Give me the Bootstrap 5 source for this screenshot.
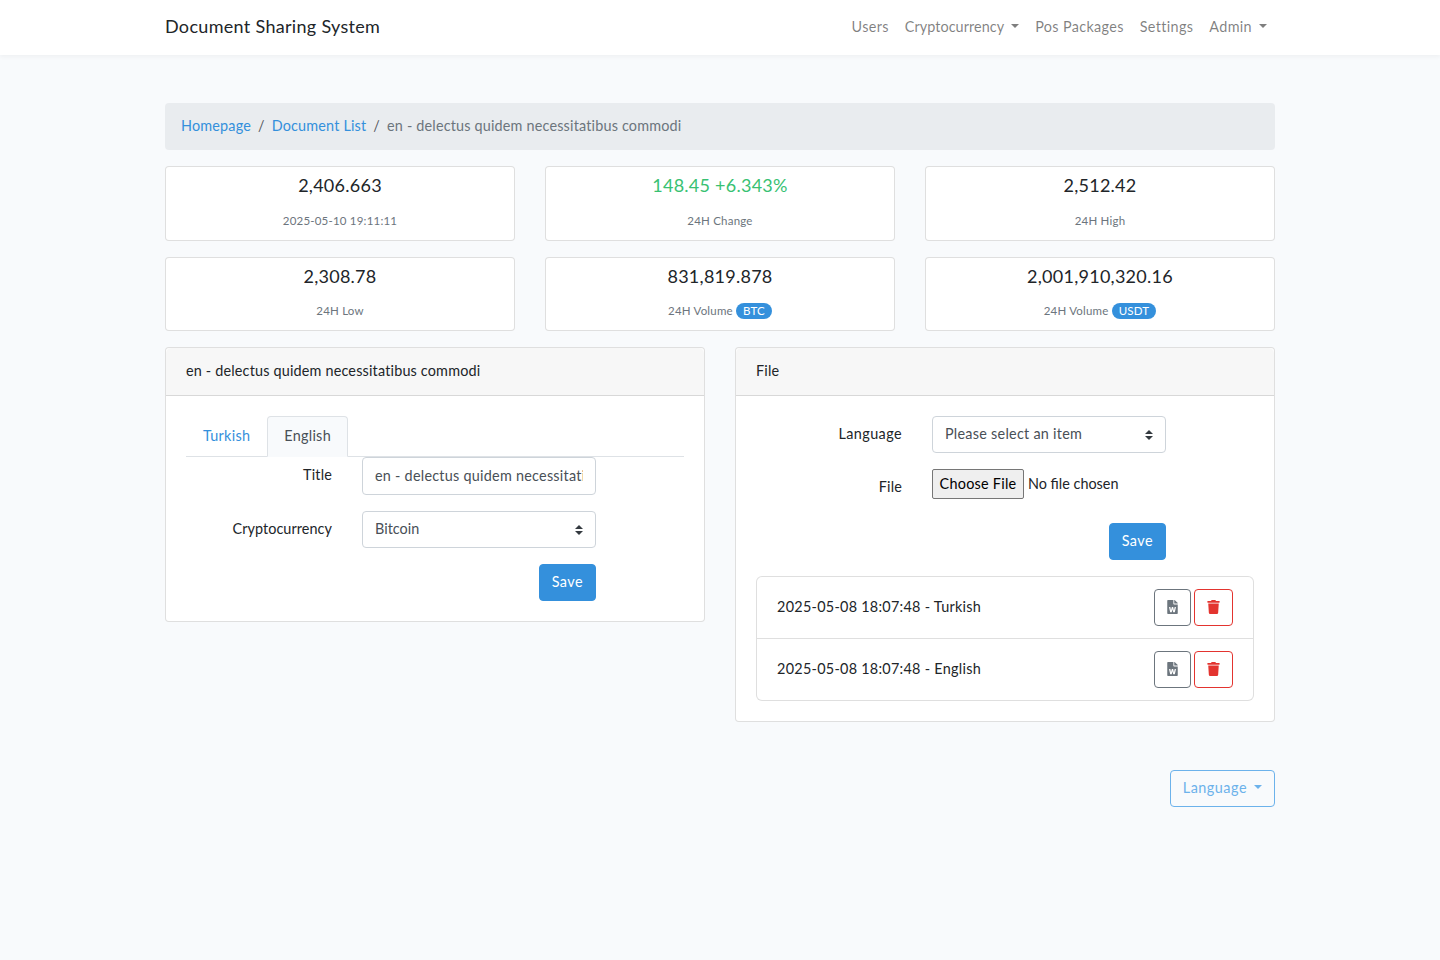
<!DOCTYPE html>
<html lang="en"><head><meta charset="utf-8"><title>Document Sharing System</title>
<link href="https://cdn.jsdelivr.net/npm/bootstrap@5.3.0/dist/css/bootstrap.min.css" rel="stylesheet">
<style>
body{font-family:Lato,"Noto Sans",sans-serif;font-size:14.4px;line-height:1.6;background:#f8fafc;color:#212529;--bs-body-font-size:14.4px;letter-spacing:.18px;}
.wrap{max-width:1140px;margin:0 auto;padding:0 15px;}
.top-bar{background:#fff;height:55px;box-shadow:0 2px 4px rgba(0,0,0,.04);padding:0;}
.top-bar .navbar-brand{font-size:18px;padding:0 0 4px;margin:0;color:#212529;line-height:28px;letter-spacing:.31px;}
.top-bar .nav-link{color:rgba(0,0,0,.5);padding:7px 8px 9px;font-size:14.4px;line-height:23px;letter-spacing:.34px;}
.top-bar .nav-link.tight,.tight{letter-spacing:.07px;}
.top-bar .dropdown-toggle::after{margin-left:7px;}
.page{padding-top:48px;}
.crumbs{background:#e9ecef;border-radius:4px;padding:11px 16px 13px;margin-bottom:16px;font-size:14.4px;--bs-breadcrumb-item-padding-x:7px;}
.crumbs a{color:#3490dc;text-decoration:none;}
.crumbs .breadcrumb-item.active{color:#6c757d;}
.gut{--bs-gutter-x:30px;--bs-gutter-y:0;}
.stat{border:1px solid rgba(0,0,0,.125);border-radius:4px;background:#fff;text-align:center;margin-bottom:16px;height:75px;padding-top:4px;}
.stat-b{height:74px;}
.stat-b h5{margin-bottom:11px;}
.stat h5{font-size:18px;line-height:29px;margin-top:0;font-weight:400;color:#212529;letter-spacing:.25px;}
.stat:not(.stat-b) h5{margin-bottom:12px;}
.stat p{font-size:11.5px;line-height:18px;margin:0;color:#6c757d;letter-spacing:.2px;}
.stat .up{color:#38c172;}
.pill{display:inline-block;background:#3490dc;color:#fff;border-radius:10rem;font-size:11.5px;line-height:12px;padding:2px 7px;font-weight:400;}
.pane{border:1px solid rgba(0,0,0,.125);border-radius:4px;background:#fff;}
.pane>.card-header{padding:11px 20px 13px;background:rgba(0,0,0,.03);border-bottom:1px solid rgba(0,0,0,.125);line-height:23px;height:48px;}
.pane>.card-body{padding:20px;}
.tabs-x .nav-link{padding:7px 16px 9px;color:#3490dc;line-height:23px;height:41px;font-size:14.4px;border-radius:4px 4px 0 0;letter-spacing:.28px;}
.tabs-x .nav-link.active{background:#f8fafc;color:#495057;border-color:#dee2e6 #dee2e6 #f8fafc;}
.tabs-x{border-bottom-color:#dee2e6;}
.lab{text-align:right;font-size:14.4px;line-height:23px;padding-top:6px;padding-bottom:8px;margin:0;}
.lab-t{padding-top:6px;}
.lab-f{padding-top:6px;padding-bottom:9px;}
.lab-w{letter-spacing:.42px;}
.fld{height:38px;font-size:14.4px;color:#495057;border:1px solid #ced4da;border-radius:4px;padding:5px 12px 7px;line-height:23px;letter-spacing:.25px;}
.sel{height:37px;letter-spacing:.02px;}
.sel-w{letter-spacing:.26px;}
.form-select.fld{padding-right:36px;background:#fff url("data:image/svg+xml,%3csvg xmlns='http://www.w3.org/2000/svg' width='4' height='5' viewBox='0 0 4 5'%3e%3cpath fill='%23343a40' d='M2 0L0 2h4zm0 5L0 3h4z'/%3e%3c/svg%3e") right 12px center/8px 10px no-repeat;}
.frow{margin-bottom:16px;}
.act{background:#3490dc;border-color:#3490dc;color:#fff;font-size:14.4px;line-height:23px;padding:5px 12px 7px;border-radius:4px;height:37px;min-width:57px;letter-spacing:.45px;}
.up-f{font-size:14.4px;font-family:inherit;line-height:1;display:block;width:234px;color:#212529;}
.up-f::file-selector-button{height:30px;width:92px;padding:0;margin-right:4px;background:#efefef;border:1px solid #767676;border-radius:2px;color:#000;font:inherit;letter-spacing:.26px;}
.rowlist .list-group-item{padding:12px 20px;border-color:rgba(0,0,0,.125);font-size:14.4px;letter-spacing:.28px;}
.rowlist .list-group-item>span:first-child{padding-bottom:2px;}
.tools{gap:3px;}
.ico{width:37px;height:37px;padding:0;display:inline-flex;align-items:center;justify-content:center;border-radius:4px;background:transparent;}
.ico svg{margin-bottom:2px;}
.ico-g{border:1px solid #6c757d;color:#6c757d;}
.ico-r{border:1px solid #e3342f;color:#e3342f;width:39px;}
.lang{color:#6cb2eb;border:1px solid #6cb2eb;font-size:14.4px;line-height:23px;padding:5px 12px 7px;border-radius:4px;height:37px;background:transparent;letter-spacing:.5px;}
.lang::after{margin-left:7px;}
.foot-lang{margin-top:48px;}
</style></head><body>
<nav class="navbar top-bar"><div class="wrap w-100 d-flex justify-content-between align-items-center">
<a class="navbar-brand" href="#">Document Sharing System</a>
<ul class="nav">
<li class="nav-item"><a class="nav-link" href="#">Users</a></li>
<li class="nav-item"><a class="nav-link dropdown-toggle tight" href="#">Cryptocurrency</a></li>
<li class="nav-item"><a class="nav-link" href="#">Pos Packages</a></li>
<li class="nav-item"><a class="nav-link" href="#">Settings</a></li>
<li class="nav-item"><a class="nav-link dropdown-toggle" href="#">Admin</a></li>
</ul></div></nav>
<main class="wrap page">
<ol class="breadcrumb crumbs"><li class="breadcrumb-item"><a href="#">Homepage</a></li><li class="breadcrumb-item"><a href="#">Document List</a></li><li class="breadcrumb-item active">en - delectus quidem necessitatibus commodi</li></ol>
<div class="row gut">
<div class="col-4"><div class="stat"><h5>2,406.663</h5><p>2025-05-10 19:11:11</p></div></div>
<div class="col-4"><div class="stat"><h5 class="up">148.45 +6.343%</h5><p>24H Change</p></div></div>
<div class="col-4"><div class="stat"><h5>2,512.42</h5><p>24H High</p></div></div>
<div class="col-4"><div class="stat stat-b"><h5>2,308.78</h5><p>24H Low</p></div></div>
<div class="col-4"><div class="stat stat-b"><h5>831,819.878</h5><p>24H Volume <span class="pill">BTC</span></p></div></div>
<div class="col-4"><div class="stat stat-b"><h5>2,001,910,320.16</h5><p>24H Volume <span class="pill">USDT</span></p></div></div>
</div>
<div class="row gut align-items-start">
<div class="col-6"><div class="card pane"><div class="card-header">en - delectus quidem necessitatibus commodi</div><div class="card-body">
<ul class="nav nav-tabs tabs-x"><li class="nav-item"><a class="nav-link" href="#">Turkish</a></li><li class="nav-item"><a class="nav-link active" href="#">English</a></li></ul>
<div class="row gut frow"><label class="col-4 lab lab-t">Title</label><div class="col-6"><input class="form-control fld" value="en - delectus quidem necessitatibus commodi"></div></div>
<div class="row gut frow"><label class="col-4 lab tight">Cryptocurrency</label><div class="col-6"><select class="form-select fld sel"><option>Bitcoin</option></select></div></div>
<div class="row gut"><div class="col-6 offset-4 text-end"><button class="btn act">Save</button></div></div>
</div></div></div>
<div class="col-6"><div class="card pane"><div class="card-header">File</div><div class="card-body">
<div class="row gut frow"><label class="col-4 lab lab-w">Language</label><div class="col-6"><select class="form-select fld sel sel-w"><option>Please select an item</option></select></div></div>
<div class="row gut frow"><label class="col-4 lab lab-f">File</label><div class="col-6"><input type="file" class="up-f"></div></div>
<div class="row gut frow"><div class="col-6 offset-4 text-end"><button class="btn act">Save</button></div></div>
<ul class="list-group rowlist">
<li class="list-group-item d-flex justify-content-between align-items-center"><span>2025-05-08 18:07:48 - Turkish</span><span class="d-flex tools"><button class="ico ico-g"><svg width="11" height="14" viewBox="0 0 384 512" fill="currentColor"><path d="M224 136V0H24C10.7 0 0 10.7 0 24v464c0 13.3 10.7 24 24 24h336c13.3 0 24-10.7 24-24V160H248c-13.2 0-24-10.8-24-24zm57.1 120H305c7.7 0 13.4 7.1 11.7 14.7l-38 168c-1.2 5.5-6.1 9.3-11.7 9.3h-38c-5.5 0-10.3-3.8-11.6-9.1-25.8-103.5-20.8-81.2-25.6-110.5h-.5c-1.1 14.3-2.4 17.4-25.6 110.5-1.3 5.3-6.1 9.1-11.6 9.1H117c-5.6 0-10.5-3.9-11.7-9.4l-37.8-168c-1.7-7.5 4-14.6 11.7-14.6h24.5c5.7 0 10.7 4 11.8 9.7 15.6 78 20.1 109.5 21 122.2 1.6-10.2 7.3-32.7 29.4-122.7 1.3-5.4 6.1-9.1 11.7-9.1h29.1c5.6 0 10.4 3.8 11.7 9.2 24 100.4 28.8 124 29.6 129.4-.2-11.2-2.6-17.8 21.6-129.2 1-5.6 5.9-9.5 11.5-9.5zM384 121.9v6.1H256V0h6.1c6.4 0 12.5 2.5 17 7l97.9 98c4.5 4.5 7 10.6 7 16.9z"/></svg></button><button class="ico ico-r"><svg width="13" height="14" viewBox="0 0 448 512" fill="currentColor"><path d="M432 32H312l-9.4-18.7A24 24 0 0 0 281.1 0H166.8a23.72 23.72 0 0 0-21.4 13.3L136 32H16A16 16 0 0 0 0 48v32a16 16 0 0 0 16 16h416a16 16 0 0 0 16-16V48a16 16 0 0 0-16-16zM53.2 467a48 48 0 0 0 47.9 45h245.8a48 48 0 0 0 47.9-45L416 128H32z"/></svg></button></span></li>
<li class="list-group-item d-flex justify-content-between align-items-center"><span>2025-05-08 18:07:48 - English</span><span class="d-flex tools"><button class="ico ico-g"><svg width="11" height="14" viewBox="0 0 384 512" fill="currentColor"><path d="M224 136V0H24C10.7 0 0 10.7 0 24v464c0 13.3 10.7 24 24 24h336c13.3 0 24-10.7 24-24V160H248c-13.2 0-24-10.8-24-24zm57.1 120H305c7.7 0 13.4 7.1 11.7 14.7l-38 168c-1.2 5.5-6.1 9.3-11.7 9.3h-38c-5.5 0-10.3-3.8-11.6-9.1-25.8-103.5-20.8-81.2-25.6-110.5h-.5c-1.1 14.3-2.4 17.4-25.6 110.5-1.3 5.3-6.1 9.1-11.6 9.1H117c-5.6 0-10.5-3.9-11.7-9.4l-37.8-168c-1.7-7.5 4-14.6 11.7-14.6h24.5c5.7 0 10.7 4 11.8 9.7 15.6 78 20.1 109.5 21 122.2 1.6-10.2 7.3-32.7 29.4-122.7 1.3-5.4 6.1-9.1 11.7-9.1h29.1c5.6 0 10.4 3.8 11.7 9.2 24 100.4 28.8 124 29.6 129.4-.2-11.2-2.6-17.8 21.6-129.2 1-5.6 5.9-9.5 11.5-9.5zM384 121.9v6.1H256V0h6.1c6.4 0 12.5 2.5 17 7l97.9 98c4.5 4.5 7 10.6 7 16.9z"/></svg></button><button class="ico ico-r"><svg width="13" height="14" viewBox="0 0 448 512" fill="currentColor"><path d="M432 32H312l-9.4-18.7A24 24 0 0 0 281.1 0H166.8a23.72 23.72 0 0 0-21.4 13.3L136 32H16A16 16 0 0 0 0 48v32a16 16 0 0 0 16 16h416a16 16 0 0 0 16-16V48a16 16 0 0 0-16-16zM53.2 467a48 48 0 0 0 47.9 45h245.8a48 48 0 0 0 47.9-45L416 128H32z"/></svg></button></span></li>
</ul>
</div></div></div>
</div>
<div class="d-flex justify-content-end foot-lang"><button class="btn lang dropdown-toggle">Language</button></div>
</main>
<script src="https://cdn.jsdelivr.net/npm/bootstrap@5.3.0/dist/js/bootstrap.bundle.min.js"></script>
</body></html>
